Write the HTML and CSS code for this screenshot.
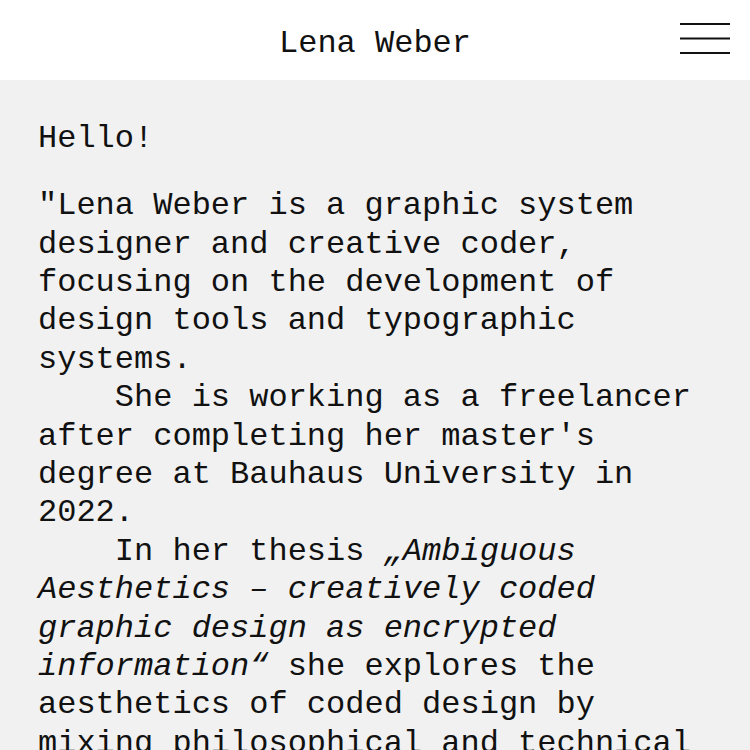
FILE: index.html
```html
<!DOCTYPE html>
<html lang="en">
<head>
<meta charset="utf-8">
<title>Lena Weber</title>
<link rel="stylesheet" href="styles.css">
</head>
<body>
<header class="site-header">
  <span class="spacer"></span>
  <h1 class="site-title">Lena Weber</h1>
  <button class="menu-btn" aria-label="Menu">
    <svg width="50" height="32" viewBox="0 0 50 32"><rect x="0" y="0" width="50" height="2"/><rect x="0" y="14.5" width="50" height="2"/><rect x="0" y="29" width="50" height="2"/></svg>
  </button>
</header>
<main class="content">
  <p class="greeting">Hello!</p>
  <div class="bio">
    <p>"Lena Weber is a graphic system designer and creative coder, focusing on the development of design tools and typographic systems.</p>
    <p class="indent">She is working as a freelancer after completing her master's degree at Bauhaus University in 2022.</p>
    <p class="indent">In her thesis <em>„Ambiguous Aesthetics – creatively coded graphic design as encrypted information“</em> she explores the aesthetics of coded design by mixing philosophical and technical perspectives."</p>
  </div>
</main>
</body>
</html>
```
FILE: styles.css
```css
html, body {
  margin: 0;
  padding: 0;
}
body {
  background: #f1f1f1;
  color: #111;
  font-family: "Liberation Mono", "DejaVu Sans Mono", monospace;
  font-size: 32px;
  line-height: 38.4px;
}
.site-header {
  background: #fff;
  height: 80px;
  display: grid;
  grid-template-columns: 1fr auto 1fr;
  align-items: start;
  padding: 0 20px 0 20px;
  box-sizing: border-box;
}
.site-title {
  margin: 0;
  padding-top: 25px;
  font-size: 32px;
  font-weight: normal;
  line-height: 38.4px;
}
.menu-btn {
  justify-self: end;
  margin-top: 23px;
  padding: 0;
  border: 0;
  background: none;
  width: 50px;
  height: 32px;
  display: block;
}
.menu-btn svg {
  display: block;
  fill: #111;
}
.content {
  padding: 40px 38px 40px 38px;
}
.content p {
  margin: 0;
}
.greeting {
  margin-bottom: 28.8px !important;
}
.indent {
  text-indent: 4ch;
}
.content em {
  font-style: italic;
}
```
